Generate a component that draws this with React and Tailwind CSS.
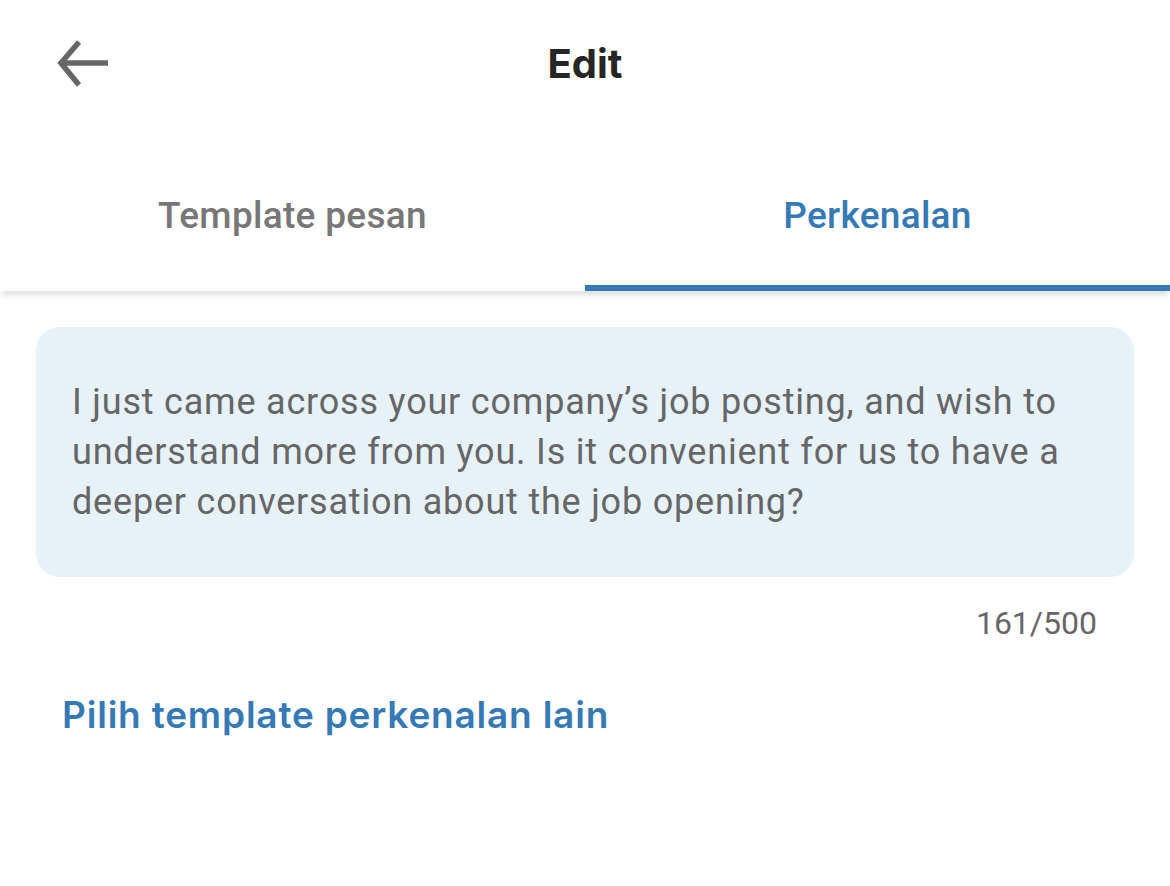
export default function App() {
    return (
        <div className="w-[1170px] h-[886px] bg-white overflow-hidden" style={{ fontFamily: "Roboto, 'Noto Sans', sans-serif" }}>
            <header className="relative h-[128px] flex items-center justify-center">
                <button className="absolute left-[56px] top-[38px] w-[56px] h-[52px] flex items-center justify-center">
                    <svg width="56" height="52" viewBox="0 0 56 52" fill="none" stroke="#666666" strokeWidth="5.5">
                        <path d="M52 25 H7" />
                        <path d="M23 4 L5 25 L23 47" />
                    </svg>
                </button>
                <h1 className="text-[40px] font-bold text-[#262626]" style={{ fontFamily: "Inter, sans-serif" }}>Edit</h1>
            </header>
            <nav className="flex shadow-[0_6px_6px_-2px_rgba(0,0,0,0.13)] relative">
                <button className="flex-1 h-[163px] pt-[18px] border-b-[6px] border-transparent flex items-center justify-center text-[37px] font-medium tracking-[0.3px] text-[#777777]">
                    Template pesan
                </button>
                <button className="flex-1 h-[163px] pt-[18px] border-b-[6px] border-[#357ab5] flex items-center justify-center text-[37px] font-medium tracking-[0.3px] text-[#357ab5]">
                    Perkenalan
                </button>
            </nav>
            <div className="mx-[36px] mt-[36px] rounded-[24px] bg-[#e7f1f8] pl-[36px] pr-[24px] py-[50px]">
                <p className="text-[36px] leading-[50px] tracking-[0.8px] text-[#666666]">
                    I just came across your company’s job posting, and wish to understand more from you. Is it convenient for us to have a deeper conversation about the job opening?
                </p>
            </div>
            <div className="mt-[28px] pr-[73px] text-right text-[32px] leading-[36px] text-[#666666]">161/500</div>
            <a className="block mt-[54px] ml-[62px] text-[37px] leading-[40px] tracking-[0.8px] font-semibold text-[#357ab5]" style={{ fontFamily: "Inter, sans-serif" }}>
                Pilih template perkenalan lain
            </a>
        </div>
    );
}
